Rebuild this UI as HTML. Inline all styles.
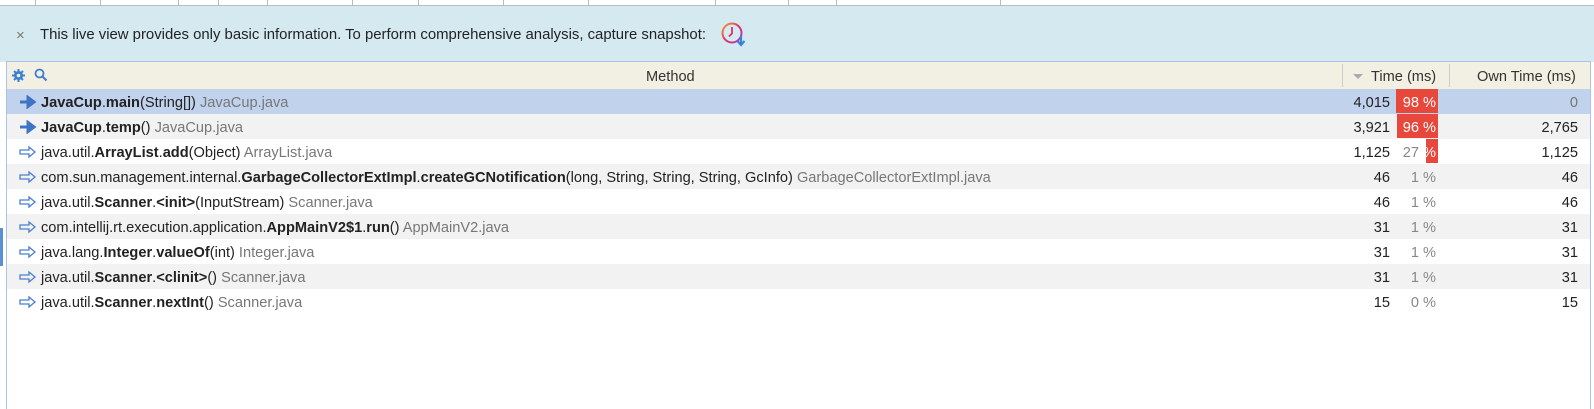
<!DOCTYPE html><html><head><style>
body{margin:0;width:1594px;height:408px;background:#fff;font-family:"Liberation Sans",sans-serif;font-size:14.6px;color:#222;position:relative;overflow:hidden}
.top{position:absolute;left:0;top:0;width:1594px;height:5px;border-bottom:1px solid #bbb}
.top i{position:absolute;top:0;width:1px;height:5px;background:#bbb}
.info{position:absolute;left:0;top:6px;width:1594px;height:56px;background:#d5eaf0}
.info .x{position:absolute;left:16px;top:21px;color:#777;font-size:15px}
.info .t{position:absolute;left:40px;top:21px;color:#222;font-size:14.9px}
.tbl{position:absolute;left:6px;top:61px;width:1583px;height:347px;border:1px solid #a9c4e6;border-bottom:none;background:#fff}
.hdr{position:absolute;left:0;top:0;width:1583px;height:27px;background:#f2efe3;border-bottom:1px solid #ddd}
.hdr span{position:absolute;top:7px}
.sep{position:absolute;top:2px;width:1px;height:23px;background:#ccc}
.row{position:absolute;left:0;width:1583px;height:25px}
.row .m{position:absolute;left:34px;top:6px;white-space:nowrap}
.row .ar{position:absolute;left:12px;top:6px}
.g{color:#777}
.n{position:absolute;right:200px;top:6px;width:80px;text-align:right}
.p{position:absolute;left:1389px;top:0;height:24px;width:42px}
.p b{position:absolute;right:0;top:0;height:24px;background:#e8483c}
.p s{position:absolute;right:2px;top:6px;text-decoration:none;color:#888}
.o{position:absolute;right:12px;top:6px}
</style></head><body>
<div class="top"><i style="left:35px"></i><i style="left:100px"></i><i style="left:178px"></i><i style="left:218px"></i><i style="left:267px"></i><i style="left:352px"></i><i style="left:418px"></i><i style="left:503px"></i><i style="left:588px"></i><i style="left:715px"></i><i style="left:788px"></i><i style="left:836px"></i><i style="left:1000px"></i></div>
<div class="info"><span class="x">×</span><span class="t">This live view provides only basic information. To perform comprehensive analysis, capture snapshot:</span>
<svg style="position:absolute;left:720px;top:15px" width="28" height="30" viewBox="0 0 28 30"><defs><linearGradient id="gr" x1="0" y1="0" x2="1" y2="1"><stop offset="0" stop-color="#f0a030"/><stop offset="0.5" stop-color="#e8306a"/><stop offset="1" stop-color="#a040c0"/></linearGradient></defs><circle cx="12" cy="12" r="9.5" fill="none" stroke="url(#gr)" stroke-width="2"/><path d="M12 6v6.5l-3 3" fill="none" stroke="#e0306a" stroke-width="1.8"/><path d="M21 15v8M17.5 20l3.5 4 3.5-4" fill="none" stroke="#3b82d6" stroke-width="2.2"/></svg></div>
<div style="position:absolute;left:0;top:228px;width:3px;height:38px;background:#5a8fd8"></div>
<div class="tbl">
<div class="hdr">
<svg style="position:absolute;left:5px;top:7px" width="13" height="13" viewBox="0 0 13 13"><path d="M6.5 0v13M0 6.5h13M2 2l9 9M11 2l-9 9" stroke="#3b7fd0" stroke-width="2"/><circle cx="6.5" cy="6.5" r="4.5" fill="#3b7fd0"/><circle cx="6.5" cy="6.5" r="1.8" fill="#f2efe3"/></svg>
<svg style="position:absolute;left:27px;top:6px" width="14" height="14" viewBox="0 0 14 14"><circle cx="5.5" cy="5.5" r="4" fill="none" stroke="#3b7fd0" stroke-width="1.8"/><path d="M8.5 8.5l4 4" stroke="#3b7fd0" stroke-width="2"/></svg>
<span style="left:639px;color:#333">Method</span>
<div class="sep" style="left:1335px"></div>
<svg style="position:absolute;left:1346px;top:12px" width="10" height="6"><path d="M0 0h10L5 5z" fill="#aaa"/></svg>
<span style="left:1364px;color:#333">Time (ms)</span>
<div class="sep" style="left:1442px"></div>
<span style="left:1470px;color:#333">Own Time (ms)</span>
</div>
</div>
<div style="position:absolute;left:7px;top:89px">
<div class="row" style="top:0;background:#c0d2ec"><svg class="ar" width="18" height="14" viewBox="0 0 18 14"><path d="M1 7h11M9 2.5l6 4.5-6 4.5z" stroke="#3e74c6" stroke-width="3" fill="#3e74c6"/></svg><span class="m"><b>JavaCup</b>.<b>main</b>(String[]) <span class="g">JavaCup.java</span></span><span class="n">4,015</span><div class="p"><b style="width:42px"></b><s style="color:#fff">98 %</s></div><span class="o g">0</span></div>
<div class="row" style="top:25px;background:#f2f2f2"><svg class="ar" width="18" height="14" viewBox="0 0 18 14"><path d="M1 7h11M9 2.5l6 4.5-6 4.5z" stroke="#3e74c6" stroke-width="3" fill="#3e74c6"/></svg><span class="m"><b>JavaCup</b>.<b>temp</b>() <span class="g">JavaCup.java</span></span><span class="n">3,921</span><div class="p"><b style="width:41px"></b><s style="color:#fff">96 %</s></div><span class="o">2,765</span></div>
<div class="row" style="top:50px"><svg class="ar" width="18" height="14" viewBox="0 0 18 14"><path d="M1 5h9V2l6 5-6 5V9H1z" stroke="#4a7fcf" stroke-width="1.3" fill="none"/></svg><span class="m">java.util.<b>ArrayList</b>.<b>add</b>(Object) <span class="g">ArrayList.java</span></span><span class="n">1,125</span><div class="p"><b style="width:12px"></b><s style="color:#888">27 <span style="color:#fff">%</span></s></div><span class="o">1,125</span></div>
<div class="row" style="top:75px;background:#f2f2f2"><svg class="ar" width="18" height="14" viewBox="0 0 18 14"><path d="M1 5h9V2l6 5-6 5V9H1z" stroke="#4a7fcf" stroke-width="1.3" fill="none"/></svg><span class="m">com.sun.management.internal.<b>GarbageCollectorExtImpl</b>.<b>createGCNotification</b>(long, String, String, String, GcInfo) <span class="g">GarbageCollectorExtImpl.java</span></span><span class="n">46</span><div class="p"><s>1 %</s></div><span class="o">46</span></div>
<div class="row" style="top:100px"><svg class="ar" width="18" height="14" viewBox="0 0 18 14"><path d="M1 5h9V2l6 5-6 5V9H1z" stroke="#4a7fcf" stroke-width="1.3" fill="none"/></svg><span class="m">java.util.<b>Scanner</b>.<b>&lt;init&gt;</b>(InputStream) <span class="g">Scanner.java</span></span><span class="n">46</span><div class="p"><s>1 %</s></div><span class="o">46</span></div>
<div class="row" style="top:125px;background:#f2f2f2"><svg class="ar" width="18" height="14" viewBox="0 0 18 14"><path d="M1 5h9V2l6 5-6 5V9H1z" stroke="#4a7fcf" stroke-width="1.3" fill="none"/></svg><span class="m">com.intellij.rt.execution.application.<b>AppMainV2$1</b>.<b>run</b>() <span class="g">AppMainV2.java</span></span><span class="n">31</span><div class="p"><s>1 %</s></div><span class="o">31</span></div>
<div class="row" style="top:150px"><svg class="ar" width="18" height="14" viewBox="0 0 18 14"><path d="M1 5h9V2l6 5-6 5V9H1z" stroke="#4a7fcf" stroke-width="1.3" fill="none"/></svg><span class="m">java.lang.<b>Integer</b>.<b>valueOf</b>(int) <span class="g">Integer.java</span></span><span class="n">31</span><div class="p"><s>1 %</s></div><span class="o">31</span></div>
<div class="row" style="top:175px;background:#f2f2f2"><svg class="ar" width="18" height="14" viewBox="0 0 18 14"><path d="M1 5h9V2l6 5-6 5V9H1z" stroke="#4a7fcf" stroke-width="1.3" fill="none"/></svg><span class="m">java.util.<b>Scanner</b>.<b>&lt;clinit&gt;</b>() <span class="g">Scanner.java</span></span><span class="n">31</span><div class="p"><s>1 %</s></div><span class="o">31</span></div>
<div class="row" style="top:200px"><svg class="ar" width="18" height="14" viewBox="0 0 18 14"><path d="M1 5h9V2l6 5-6 5V9H1z" stroke="#4a7fcf" stroke-width="1.3" fill="none"/></svg><span class="m">java.util.<b>Scanner</b>.<b>nextInt</b>() <span class="g">Scanner.java</span></span><span class="n">15</span><div class="p"><s>0 %</s></div><span class="o">15</span></div>
</div>
</body></html>
